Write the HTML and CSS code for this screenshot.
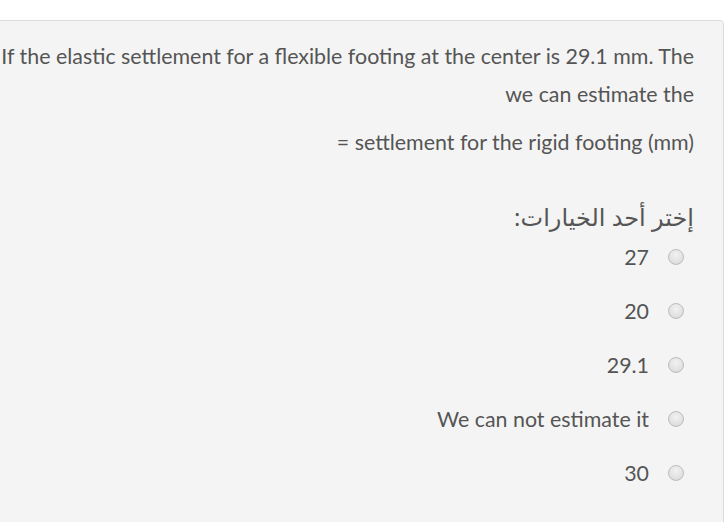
FILE: index.html
```html
<!DOCTYPE html>
<html lang="ar" dir="rtl">
<head>
<meta charset="utf-8">
<link rel="stylesheet" href="styles.css">
</head>
<body>
<div class="que">
  <div class="qtext">
    <p class="line"><span dir="ltr">If the elastic settlement for a flexible footing at the center is 29.1 mm. The<br>we can estimate the</span></p>
    <p class="line second"><span dir="ltr">= settlement for the rigid footing (mm)</span></p>
  </div>
  <div class="prompt">إختر أحد الخيارات:</div>
  <div class="answers">
    <label class="opt"><span class="radio"></span><span class="lbl" dir="ltr">27</span></label>
    <label class="opt"><span class="radio"></span><span class="lbl" dir="ltr">20</span></label>
    <label class="opt"><span class="radio"></span><span class="lbl" dir="ltr">29.1</span></label>
    <label class="opt"><span class="radio"></span><span class="lbl" dir="ltr">We can not estimate it</span></label>
    <label class="opt"><span class="radio"></span><span class="lbl" dir="ltr">30</span></label>
  </div>
</div>
</body>
</html>
```
FILE: styles.css
```css
html, body {
  margin: 0;
  padding: 0;
  background: #ffffff;
}
body {
  font-family: Lato, "Noto Sans", sans-serif;
  color: #555555;
  font-size: 21.4px;
  overflow: hidden;
  height: 522px;
}
.que {
  margin-top: 20px;
  margin-left: -8px;
  width: 731px;
  height: 520px;
  box-sizing: border-box;
  background: #f4f4f4;
  border: 1px solid #dcdcdc;
  border-radius: 4px;
  padding: 16px 29px 0 0;
  display: flex;
  flex-direction: column;
}
.qtext { text-align: right; }
.line {
  margin: 0;
  line-height: 38px;
}
.second { margin-top: 10px; }
.prompt {
  margin-top: 37px;
  line-height: 38px;
  font-family: "Noto Sans", "DejaVu Sans", sans-serif;
  font-size: 24px;
}
.answers {
  display: flex;
  flex-direction: column;
  margin-top: -6px;
}
.opt {
  display: flex;
  align-items: center;
  height: 54px;
  gap: 19px;
  margin-right: 10px;
}
.radio {
  width: 16px;
  height: 16px;
  border-radius: 50%;
  box-sizing: border-box;
  border: 1px solid #bdbdbd;
  background: radial-gradient(circle at 50% 35%, #f2f2f2 0%, #e0e0e0 65%, #d2d2d2 100%);
}
```
